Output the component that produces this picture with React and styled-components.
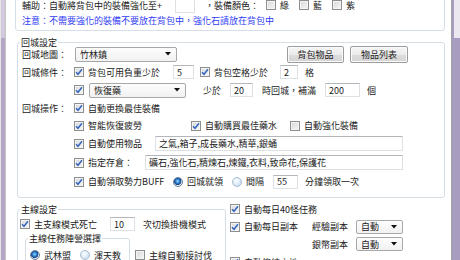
import React from 'react';
import styled, { createGlobalStyle } from 'styled-components';

const GlobalStyle = createGlobalStyle`
  html, body { margin: 0; padding: 0; background: #fff; }
  body {
    font-family: "Noto Sans CJK TC", "Noto Sans CJK SC", sans-serif;
    font-size: 9px;
    color: #202020;
  }
`;

const Window = styled.div`
  display: flex;
  width: 460px;
  height: 260px;
  overflow: hidden;
  background: #fff;
`;

const LeftFrame = styled.div`
  flex: 0 0 6px;
  box-sizing: border-box;
  border-left: 1px solid #e6e6e6;
  border-right: 1px solid #c4c4c4;
  background: linear-gradient(#d2cadc 0 38px, #b3a6c6 38px);
`;

const Content = styled.div`
  flex: 1;
  min-width: 0;
  margin-top: -20px;
  padding: 0 6px 0 9px;
`;

const ScrollTrack = styled.div`
  flex: 0 0 9px;
  box-sizing: border-box;
  border-left: 1px solid #a4a4a4;
  background: #a99cc1;
  padding-left: 2px;
`;

const ScrollThumb = styled.div`
  height: 38px;
  background: #ebe8f0;
`;

const Group = styled.fieldset`
  margin: ${p => p.$mt || 0}px 0 0 ${p => p.$ml || 0}px;
  padding: 0;
  width: ${p => (p.$w ? `${p.$w}px` : 'auto')};
  flex: 0 0 auto;
  box-sizing: border-box;
  min-width: 0;
  border: 1px solid #d5dfe5;
  border-radius: 3px;
`;

const Legend = styled.legend`
  margin-left: 2px;
  padding: 0 1px;
  font-size: 9px;
  line-height: 9px;
  color: #202020;
`;

const Body = styled.div`
  padding: ${p => p.$pt || 0}px 0 ${p => p.$pb || 0}px ${p => p.$pl || 0}px;
`;

const Row = styled.div`
  display: flex;
  align-items: ${p => p.$top ? 'flex-start' : 'center'};
  height: ${p => (p.$h ? `${p.$h}px` : 'auto')};
  margin-top: ${p => p.$mt || 0}px;
  padding-left: ${p => p.$indent || 0}px;
  white-space: nowrap;
`;

const Text = styled.span`
  flex: 0 0 ${p => (p.$w ? `${p.$w}px` : 'auto')};
  margin-left: ${p => p.$ml || 0}px;
  color: ${p => (p.$blue ? '#2f3cf6' : 'inherit')};
`;

const Opt = styled.label`
  display: inline-flex;
  align-items: center;
  flex: 0 0 ${p => (p.$w ? `${p.$w}px` : 'auto')};
  margin-left: ${p => p.$ml || 0}px;
  margin-top: ${p => p.$mt || 0}px;
  height: 18px;
`;

const Box = styled.span`
  display: flex;
  align-items: center;
  justify-content: center;
  width: 10px;
  height: 10px;
  margin-right: 4px;
  box-sizing: border-box;
  border: 1px solid #8e8f8f;
  box-shadow: inset 0 0 0 1px #f4f4f4;
  background: linear-gradient(135deg, #d6d8dc, #f7f7f7);
`;

const Dot = styled.span`
  width: 10px;
  height: 10px;
  margin-right: 4px;
  box-sizing: border-box;
  border-radius: 50%;
  border: 1px solid ${p => (p.$on ? '#6b7f97' : '#a9bccd')};
  background: ${p =>
    p.$on
      ? 'radial-gradient(circle at 45% 40%, #9fdcff 0, #2f83d6 30%, #15447f 55%, #e6ecf2 62%)'
      : 'radial-gradient(circle at 40% 35%, #ffffff 0, #d9e9f7 55%, #bcd3ea 100%)'};
`;

const Field = styled.input`
  flex: 0 0 ${p => p.$w}px;
  width: ${p => p.$w}px;
  height: ${p => p.$h || 14}px;
  margin: 0 0 0 ${p => p.$ml || 0}px;
  padding: 0 0 0 3px;
  box-sizing: border-box;
  border: 1px solid #dde1e6;
  border-top-color: #b3b6bb;
  background: #fff;
  font: inherit;
  font-size: 9px;
  color: #202020;
  outline: none;
`;

const Select = styled.div`
  display: flex;
  align-items: center;
  justify-content: space-between;
  flex: 0 0 ${p => p.$w}px;
  height: ${p => p.$h || 15}px;
  margin-left: ${p => p.$ml || 0}px;
  padding: 0 5px 0 4px;
  box-sizing: border-box;
  border: 1px solid #a8a8a8;
  border-radius: 2px;
  background: linear-gradient(#fdfdfd, #f1f1f1);
`;

const Button = styled.button`
  flex: 0 0 ${p => p.$w}px;
  height: 17px;
  margin-left: ${p => p.$ml || 0}px;
  padding: 0;
  border: 1px solid #9c9c9c;
  border-radius: 2px;
  background: linear-gradient(#f6f6f6 0%, #ebebeb 50%, #dddddd 51%, #d4d4d4 100%);
  box-shadow: inset 0 0 0 1px #fbfbfb;
  font: inherit;
  color: #202020;
`;

const Bottom = styled.div`
  display: flex;
  align-items: flex-start;
  margin: 7px 0 0 2px;
`;

const Side = styled.div`
  margin: -5px 0 0 4px;
`;

function Check({ on, label, w, ml, mt }) {
  return (
    <Opt $w={w} $ml={ml} $mt={mt}>
      <Box>
        {on && (
          <svg width="8" height="8" viewBox="0 0 8 8">
            <path d="M1 4.3 L3 6.3 L7 1.3" fill="none" stroke="#3565bd" strokeWidth="1.5" />
          </svg>
        )}
      </Box>
      {label}
    </Opt>
  );
}

function Radio({ on, label, w, ml }) {
  return (
    <Opt $w={w} $ml={ml}>
      <Dot $on={on} />
      {label}
    </Opt>
  );
}

function Drop({ value, w, h, ml }) {
  return (
    <Select $w={w} $h={h} $ml={ml}>
      <span>{value}</span>
      <svg width="6" height="4" viewBox="0 0 6 4">
        <path d="M0 0 H6 L3 3.5 Z" fill="#111" />
      </svg>
    </Select>
  );
}

export default function App() {
  return (
    <Window>
      <GlobalStyle />
      <LeftFrame />
      <Content>
        <Group>
          <Body $pt={15} $pb={3} $pl={6}>
            <Row $h={18}>
              <Text $w={153}>輔助：自動將背包中的裝備強化至+</Text>
              <Field $w={20} $h={15} readOnly value="" />
              <Text $ml={10} $w={61}>，裝備顏色：</Text>
              <Check label="綠" w={33} />
              <Check label="藍" w={33} />
              <Check label="紫" />
            </Row>
            <Row $h={13}>
              <Text $blue>注意：不需要強化的裝備不要放在背包中，強化石請放在背包中</Text>
            </Row>
          </Body>
        </Group>

        <Group $mt={7} $ml={2}>
          <Legend>回城設定</Legend>
          <Body $pl={4} $pb={6}>
            <Row $h={18} $mt={-2}>
              <Text $w={52}>回城地圖：</Text>
              <Drop value="竹林鎮" w={102} ml={1} />
              <Button $w={57} $ml={110}>背包物品</Button>
              <Button $w={58} $ml={6}>物品列表</Button>
            </Row>
            <Row $h={18}>
              <Text $w={52}>回城條件：</Text>
              <Check on label="背包可用負重少於" w={99} />
              <Field $w={21} readOnly value="5" />
              <Check on label="背包空格少於" w={80} ml={6} />
              <Field $w={18} readOnly value="2" />
              <Text $ml={7}>格</Text>
            </Row>
            <Row $h={18} $indent={52}>
              <Check on w={15} />
              <Drop value="恢復藥" w={97} />
              <Text $ml={17} $w={18}>少於</Text>
              <Field $w={23} $ml={9} readOnly value="20" />
              <Text $ml={9} $w={54}>時回城，補滿</Text>
              <Field $w={35} $ml={9} readOnly value="200" />
              <Text $ml={7}>個</Text>
            </Row>
            <Row $h={18}>
              <Text $w={52}>回城操作：</Text>
              <Check on label="自動更換最佳裝備" />
            </Row>
            <Row $h={17} $indent={52}>
              <Check on label="智能恢復疲勞" w={117} />
              <Check on label="自動購買最佳藥水" w={99} />
              <Check label="自動強化裝備" />
            </Row>
            <Row $h={19} $indent={52}>
              <Check on label="自動使用物品" w={81} />
              <Field $w={248} $h={15} readOnly value="之氣,箱子,成長藥水,精華,銀蛹" />
            </Row>
            <Row $h={19} $indent={52}>
              <Check on label="指定存倉：" w={71} />
              <Field $w={258} $h={15} readOnly value="礦石,強化石,精煉石,煉鐵,衣料,致命花,保護花" />
            </Row>
            <Row $h={19} $indent={52}>
              <Check on label="自動領取勢力BUFF" w={99} />
              <Radio on label="回城就領" w={59} />
              <Radio label="間隔" w={41} />
              <Field $w={25} readOnly value="55" />
              <Text $ml={7}>分鐘領取一次</Text>
            </Row>
          </Body>
        </Group>

        <Bottom>
          <Group $w={209}>
            <Legend>主線設定</Legend>
            <Body $pl={2}>
              <Row $h={20}>
                <Check on label="主支線模式死亡" w={90} />
                <Field $w={25} readOnly value="10" />
                <Text $ml={8}>次切換掛機模式</Text>
              </Row>
              <Row $top>
                <Group $ml={5} $w={105}>
                  <Legend>主線任務陣營選擇</Legend>
                  <Body $pt={3} $pl={4} $pb={4}>
                    <Row $h={18}>
                      <Radio on label="武林盟" w={50} />
                      <Radio label="渾天教" />
                    </Row>
                  </Body>
                </Group>
                <Check label="主線自動接討伐" ml={5} mt={12} />
              </Row>
            </Body>
          </Group>
          <Side>
            <Row $h={18}>
              <Check on label="自動每日40怪任務" />
            </Row>
            <Row $h={17}>
              <Check on label="自動每日副本" w={82} />
              <Text $w={44}>經驗副本</Text>
              <Drop value="自動" w={47} h={14} />
            </Row>
            <Row $h={18}>
              <Text $ml={82} $w={44}>銀幣副本</Text>
              <Drop value="自動" w={47} h={14} />
            </Row>
            <Row $h={18}>
              <Check on label="自動修練之地" />
            </Row>
          </Side>
        </Bottom>
      </Content>
      <ScrollTrack>
        <ScrollThumb />
      </ScrollTrack>
    </Window>
  );
}
